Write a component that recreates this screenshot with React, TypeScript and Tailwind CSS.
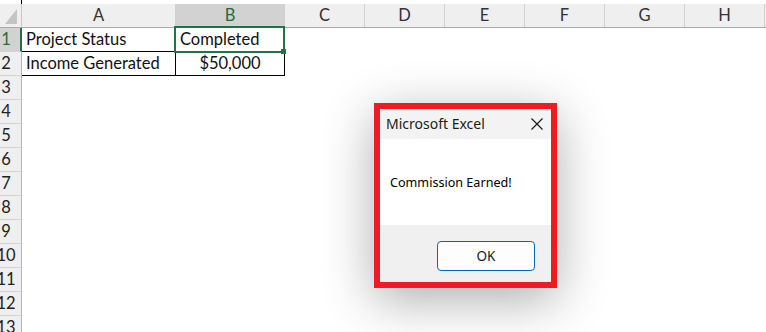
import React from 'react';

const cols = ['C', 'D', 'E', 'F', 'G', 'H'];
const rows = [3, 4, 5, 6, 7, 8, 9, 10, 11, 12, 13];

function RowHeader({ n, active }: { n: number; active?: boolean }) {
  return (
    <div
      className={
        active
          ? 'w-[22px] shrink-0 flex overflow-hidden items-center bg-[#d2d2d2] border-r-2 border-r-[#217346] border-b border-b-[#d4d4d4] text-[#217346]'
          : 'w-[22px] shrink-0 flex overflow-hidden items-center bg-[#efefef] border-r border-r-[#b4b4b4] border-b border-b-[#d4d4d4] text-[#222]'
      }
    >
      <div className="w-[12px] shrink-0 flex justify-center">
        <span className="whitespace-nowrap">{n}</span>
      </div>
    </div>
  );
}

export default function App() {
  return (
    <div className="relative w-[766px] h-[332px] overflow-hidden bg-white font-['Lato',sans-serif] text-[16.5px] leading-none">
      {/* top strip */}
      <div className="h-[4px] flex">
        <div className="w-[22px] border-r border-black" />
      </div>

      {/* column headers */}
      <div className="flex h-[24px] bg-[#efefef] border-b border-[#ababab] text-[#333]">
        <div className="w-[22px] shrink-0 border-r border-[#c8c8c8] flex items-end justify-end pr-[4px] pb-[3px]">
          <svg width="12" height="15" viewBox="0 0 12 15">
            <polygon points="12,0 12,15 0,15" fill="#c4c4c4" />
          </svg>
        </div>
        <div className="w-[154px] shrink-0 border-r border-[#d0d0d0] flex items-center justify-center">A</div>
        <div className="w-[109px] shrink-0 border-r border-[#d0d0d0] bg-[#d2d2d2] text-[#1e6b41] flex items-center justify-center">B</div>
        {cols.map((c) => (
          <div key={c} className="w-[80px] shrink-0 border-r border-[#d0d0d0] flex items-center justify-center">
            {c}
          </div>
        ))}
        <div className="flex-1" />
      </div>

      {/* row 1 */}
      <div className="flex h-[24px] text-[#111]">
        <RowHeader n={1} active />
        <div className="w-[154px] shrink-0 border-r border-b border-black flex items-center pl-[4px]">Project Status</div>
        <div className="w-[109px] shrink-0 border-r border-b border-black flex items-center pl-[4px]">Completed</div>
      </div>

      {/* row 2 */}
      <div className="flex h-[24px] text-[#111]">
        <RowHeader n={2} />
        <div className="w-[154px] shrink-0 border-r border-b border-black flex items-center pl-[4px]">Income Generated</div>
        <div className="w-[109px] shrink-0 border-r border-b border-black flex items-center justify-center">$50,000</div>
      </div>

      {rows.map((r) => (
        <div key={r} className="flex h-[24px]">
          <RowHeader n={r} />
        </div>
      ))}

      {/* active cell selection */}
      <div className="absolute left-[174px] top-[26px] w-[111px] h-[27px] border-2 border-[#217346]" />
      <div className="absolute left-[281px] top-[49px] w-[5px] h-[5px] bg-[#217346]" />

      {/* message box */}
      <div className="absolute left-[374px] top-[103px] w-[183px] h-[185px] border-[6px] border-[#ed1c24] bg-white flex flex-col shadow-[0_12px_48px_rgba(0,0,0,0.32)] font-['Noto_Sans',sans-serif]">
        <div className="h-[30px] bg-[#f3f3f3] flex items-center justify-between pl-[6px] pr-[8px] text-[14px] text-[#1b1b1b]">
          <span>Microsoft Excel</span>
          <svg width="12" height="12" viewBox="0 0 12 12">
            <path d="M0.5 0.5 L11.5 11.5 M11.5 0.5 L0.5 11.5" stroke="#1b1b1b" strokeWidth="1.2" fill="none" />
          </svg>
        </div>
        <div className="h-[86px] bg-white flex items-center pl-[10px] pt-[3px] text-[12.6px] text-black">Commission Earned!</div>
        <div className="flex-1 bg-[#f0f0f0] flex justify-end items-start pt-[16px] pr-[16px]">
          <div className="w-[98px] h-[30px] rounded-[4px] border border-[#0067c0] bg-[#fdfdfd] flex items-center justify-center pt-[1px] text-[13.5px] text-[#1b1b1b]">
            OK
          </div>
        </div>
      </div>
    </div>
  );
}
